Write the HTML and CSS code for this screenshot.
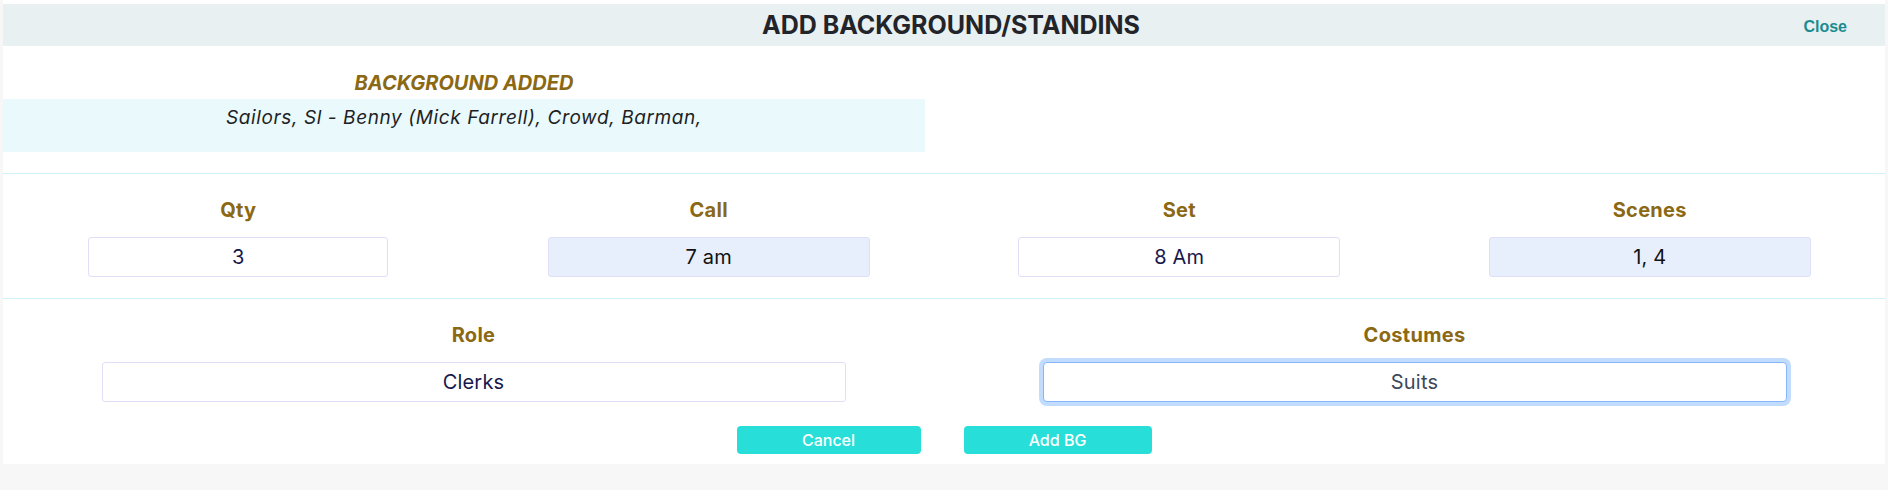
FILE: index.html
```html
<!DOCTYPE html>
<html lang="en">
<head>
<meta charset="utf-8">
<title>Add Background/Standins</title>
<link rel="stylesheet" href="styles.css">
</head>
<body>
<div class="modal">
  <div class="modal-head">
    <span class="head-side"></span>
    <h1 class="modal-title">ADD BACKGROUND/STANDINS</h1>
    <span class="head-side head-right"><a class="close-link" href="#">Close</a></span>
  </div>

  <div class="added-section">
    <div class="added-col">
      <div class="added-title">BACKGROUND ADDED</div>
      <div class="added-list">Sailors, Sl - Benny (Mick Farrell), Crowd, Barman,</div>
    </div>
  </div>

  <div class="field-row four">
    <div class="field">
      <label class="field-label">Qty</label>
      <input class="field-input narrow navy" type="text" value="3">
    </div>
    <div class="field">
      <label class="field-label">Call</label>
      <input class="field-input tinted" type="text" value="7 am">
    </div>
    <div class="field">
      <label class="field-label">Set</label>
      <input class="field-input navy" type="text" value="8 Am">
    </div>
    <div class="field">
      <label class="field-label">Scenes</label>
      <input class="field-input tinted" type="text" value="1, 4">
    </div>
  </div>

  <div class="field-row two">
    <div class="field">
      <label class="field-label">Role</label>
      <input class="field-input wide navy" type="text" value="Clerks">
    </div>
    <div class="field">
      <label class="field-label">Costumes</label>
      <input class="field-input wide focused" type="text" value="Suits">
    </div>
  </div>

  <div class="actions">
    <button class="btn btn-cancel" type="button">Cancel</button>
    <button class="btn btn-add" type="button">Add BG</button>
  </div>
</div>
</body>
</html>
```

FILE: styles.css
```css
* { box-sizing: border-box; }

html, body {
  margin: 0;
  padding: 0;
  background: #f7f7f7;
  height: 490px;
  overflow: hidden;
}

body {
  font-family: "Inter", "DejaVu Sans", sans-serif;
}

.modal {
  margin-left: 3px;
  width: 1882px;
  background: #ffffff;
  padding: 4px 0 10px 0;
}

.modal-head {
  display: grid;
  grid-template-columns: 1fr auto 1fr;
  align-items: center;
  height: 42px;
  background: #e8f0f1;
}

.modal-title {
  margin: 0;
  font-size: 25px;
  line-height: 30px;
  font-weight: 700;
  color: #222429;
  padding-left: 14px;
}

.head-right {
  display: flex;
  justify-content: flex-end;
  padding-right: 38px;
}

.close-link {
  font-family: "Liberation Sans", Arial, sans-serif;
  font-weight: 700;
  font-size: 16px;
  color: #1b8c90;
  text-decoration: none;
  padding-top: 3px;
}

.added-section {
  display: flex;
  padding: 26px 0 21px 0;
}

.added-col {
  width: 922px;
  display: flex;
  flex-direction: column;
  align-items: stretch;
}

.added-title {
  text-align: center;
  font-size: 20px;
  line-height: 22px;
  font-weight: 700;
  font-style: italic;
  color: #8b6914;
  margin-bottom: 5px;
}

.added-list {
  background: #e9f9fc;
  text-align: center;
  font-size: 19px;
  line-height: 22px;
  letter-spacing: 0.6px;
  font-style: italic;
  color: #1e1f24;
  padding: 8px 0 23px 0;
}

.field-row {
  display: grid;
  border-top: 1px solid #d0f2f6;
  padding: 24px 0 21px 0;
}

.field-row.four { grid-template-columns: repeat(4, 1fr); }
.field-row.two {
  grid-template-columns: repeat(2, 1fr);
  padding-top: 24px;
  padding-bottom: 24px;
}

.field {
  display: flex;
  flex-direction: column;
  align-items: center;
}

.field-label {
  font-size: 20px;
  line-height: 24px;
  letter-spacing: 0.3px;
  font-weight: 700;
  color: #8b6914;
  margin-bottom: 15px;
}

.field-input {
  width: 322px;
  height: 40px;
  border: 1px solid #dfe0f7;
  border-radius: 3px;
  background: #ffffff;
  text-align: center;
  font-family: "Inter", "DejaVu Sans", sans-serif;
  font-size: 20px;
  letter-spacing: 0.2px;
  color: #111111;
  outline: none;
  padding: 0 10px;
}

.field-input.narrow { width: 300px; }
.field-input.wide { width: 744px; }
.field-input.navy { color: #17174d; }
.field-input.tinted { background: #e8effc; }

.field-input.focused {
  border-color: #86b7fe;
  box-shadow: 0 0 0 4px #c1dcfc;
  border-radius: 4px;
  color: #3b4859;
}

.actions {
  display: flex;
  justify-content: center;
  gap: 43px;
}

.btn {
  height: 28px;
  border: none;
  border-radius: 4px;
  background: #27dfd8;
  color: #ffffff;
  font-family: "Inter", "DejaVu Sans", sans-serif;
  font-size: 16px;
  font-weight: 500;
  padding: 0;
}

.btn-cancel { width: 184px; }
.btn-add { width: 188px; }
```
